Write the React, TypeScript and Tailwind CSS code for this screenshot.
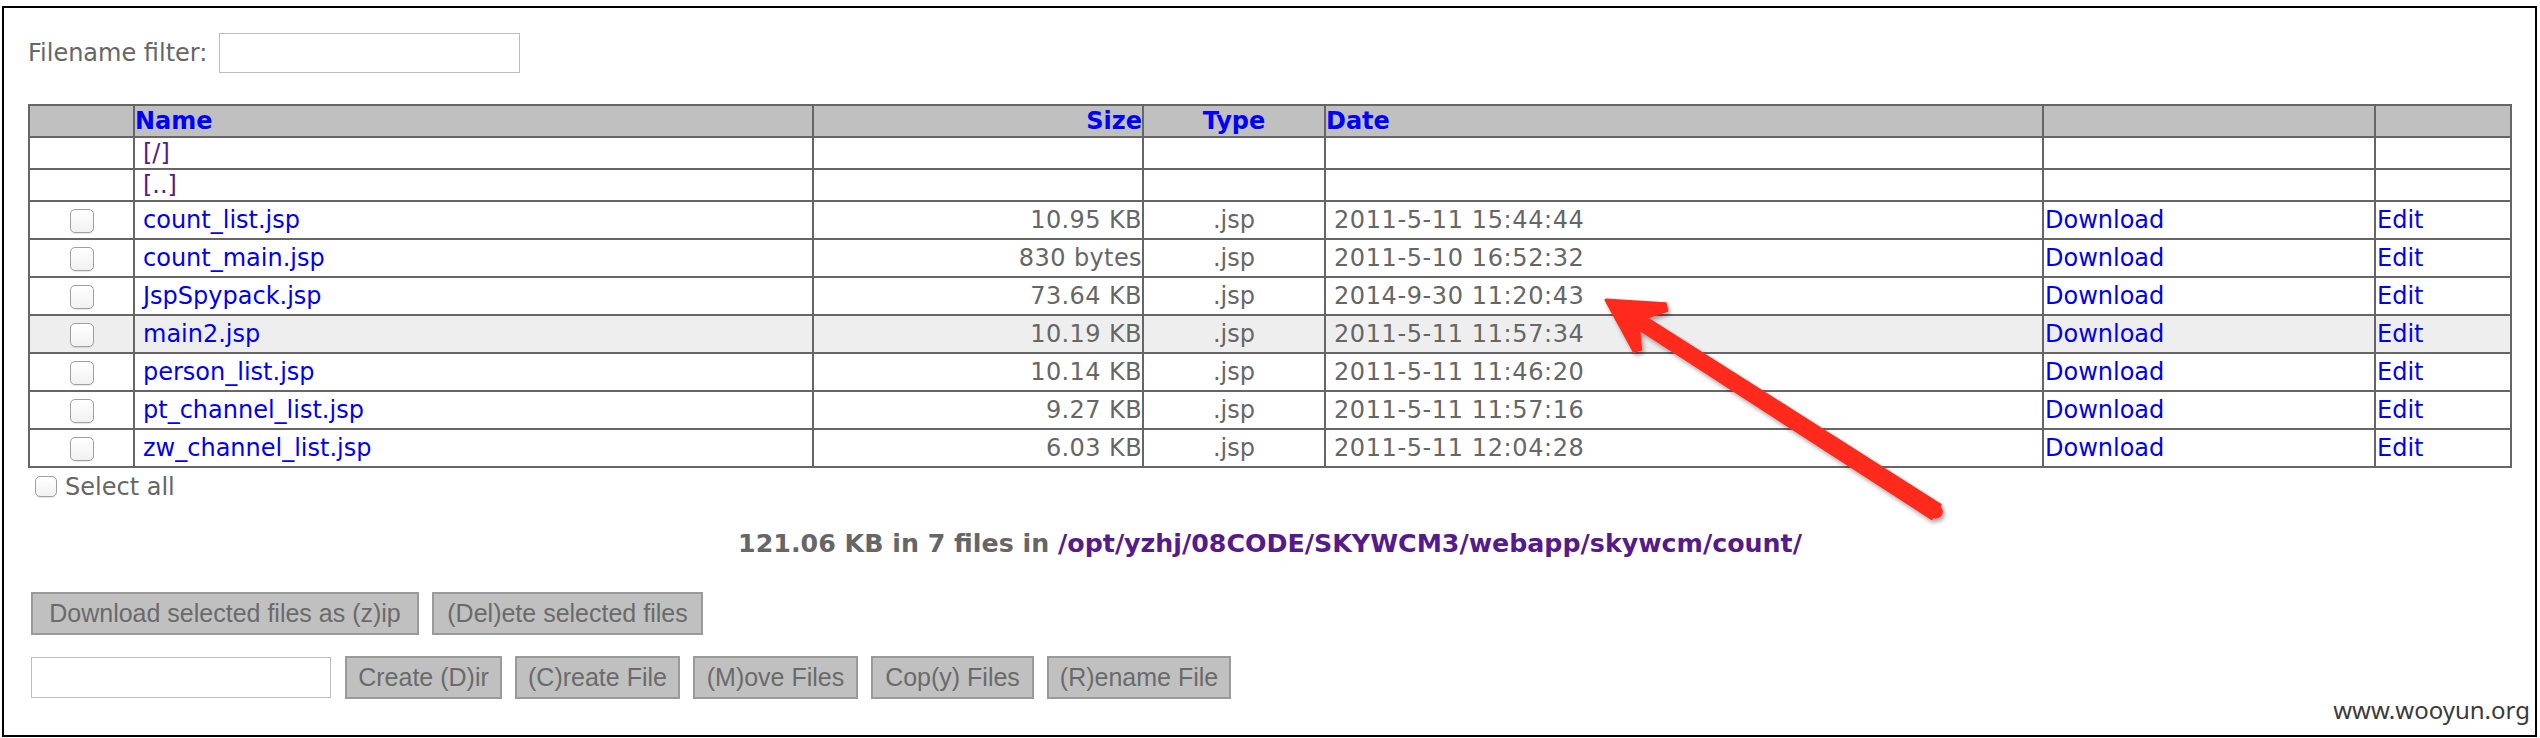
import React from "react";

const files = [
  { name: "count_list.jsp", size: "10.95 KB", date: "2011-5-11 15:44:44", hl: false },
  { name: "count_main.jsp", size: "830 bytes", date: "2011-5-10 16:52:32", hl: false },
  { name: "JspSpypack.jsp", size: "73.64 KB", date: "2014-9-30 11:20:43", hl: false },
  { name: "main2.jsp", size: "10.19 KB", date: "2011-5-11 11:57:34", hl: true },
  { name: "person_list.jsp", size: "10.14 KB", date: "2011-5-11 11:46:20", hl: false },
  { name: "pt_channel_list.jsp", size: "9.27 KB", date: "2011-5-11 11:57:16", hl: false },
  { name: "zw_channel_list.jsp", size: "6.03 KB", date: "2011-5-11 12:04:28", hl: false },
];

function Box({ small }: { small?: boolean }) {
  return (
    <span
      className={
        "inline-block rounded-[5px] border-[1.5px] border-[#a0a0a0] bg-linear-to-b from-white to-[#f1f1f1] shadow-[0_1px_1px_rgba(0,0,0,0.1)] " +
        (small ? "w-[22px] h-[21px]" : "w-[24px] h-[24px] mt-[2px]")
      }
    />
  );
}

function Arrow() {
  const T = [1606, 300];
  const u = [0.8416, 0.5399];
  const n = [0.5399, -0.8416];
  const P = (a: number, p: number) =>
    `${(T[0] + a * u[0] + p * n[0]).toFixed(1)},${(T[1] + a * u[1] + p * n[1]).toFixed(1)}`;
  const pts = [
    P(0, 0),
    P(52, 29),
    P(57, 24),
    P(43, 6.5),
    P(392, 8),
    P(392, -8),
    P(43, -6.5),
    P(56, -23),
    P(51, -28),
  ].join(" ");
  const tail = [T[0] + 392 * u[0], T[1] + 392 * u[1]];
  return (
    <svg
      className="absolute left-0 top-0 pointer-events-none"
      width={2540}
      height={738}
      viewBox="0 0 2540 738"
    >
      <defs>
        <filter id="sh" x="-20%" y="-20%" width="140%" height="140%">
          <feDropShadow dx="2" dy="3" stdDeviation="2" floodColor="#000" floodOpacity="0.35" />
        </filter>
      </defs>
      <g filter="url(#sh)" fill="#ff2b1f" stroke="#ff2b1f" strokeLinejoin="round" strokeWidth={3}>
        <polygon points={pts} />
        <circle cx={tail[0]} cy={tail[1]} r={7} stroke="none" />
      </g>
    </svg>
  );
}

export default function App() {
  const cell = "bg-white flex items-center";
  const hdr = "bg-[#c0c0c0] flex items-center font-bold text-[24px] text-[#0000ff]";
  return (
    <div className="relative w-[2540px] h-[738px] bg-white overflow-hidden pt-[6px] pl-[2px] font-['DejaVu_Sans',Verdana,sans-serif] text-[#666]">
      <div className="w-[2535px] h-[731px] border-2 border-black pl-[24px] pt-[25px]">
        <div className="flex items-center h-[40px]">
          <span className="text-[24px] leading-[28px]">Filename filter:</span>
          <input
            type="text"
            className="ml-[12px] w-[301px] h-[40px] border border-[#bdbdbd] bg-white outline-none"
          />
        </div>

        <div className="mt-[31px] w-fit grid grid-cols-[103px_677px_328px_180px_716px_330px_134px] grid-rows-[30px_30px_30px_repeat(7,36px)] gap-[2px] p-[2px] bg-[#666] text-[24px] leading-none">
          {/* header */}
          <div className="bg-[#c0c0c0]" />
          <div className={hdr}>Name</div>
          <div className={hdr + " justify-end"}>Size</div>
          <div className={hdr + " justify-center"}>Type</div>
          <div className={hdr}>Date</div>
          <div className="bg-[#c0c0c0]" />
          <div className="bg-[#c0c0c0]" />

          {["[/]", "[..]"].map((d) => (
            <React.Fragment key={d}>
              <div className={cell} />
              <div className={cell + " pl-[8px] text-[#551a8b]"}>{d}</div>
              <div className={cell} />
              <div className={cell} />
              <div className={cell} />
              <div className={cell} />
              <div className={cell} />
            </React.Fragment>
          ))}

          {files.map((f) => {
            const bg = f.hl ? "bg-[#eeeeee]" : "bg-white";
            const c = bg + " flex items-center";
            return (
              <React.Fragment key={f.name}>
                <div className={c + " justify-center"}>
                  <Box />
                </div>
                <div className={c + " pl-[8px] text-[#0000ee]"}>{f.name}</div>
                <div className={c + " justify-end tracking-[0.4px]"}>{f.size}</div>
                <div className={c + " justify-center"}>.jsp</div>
                <div className={c + " pl-[8px] tracking-[0.6px]"}>{f.date}</div>
                <div className={c + " pl-[1px] text-[#0000ee]"}>Download</div>
                <div className={c + " pl-[1px] text-[#0000ee]"}>Edit</div>
              </React.Fragment>
            );
          })}
        </div>

        <div className="mt-[8px] ml-[7px] flex items-center h-[21px]">
          <Box small />
          <span className="ml-[8px] text-[24px] leading-none">Select all</span>
        </div>

        <div className="mt-[32px] w-[2484px] text-center font-bold text-[25.3px] leading-[29px]">
          121.06 KB in 7 files in <span className="text-[#551a8b]">/opt/yzhj/08CODE/SKYWCM3/webapp/skywcm/count/</span>
        </div>

        <div className="mt-[34px] ml-[3px] flex gap-[13px] font-['Liberation_Sans',Arial,sans-serif] text-[25px] leading-[29px] text-[#6a6a6a]">
          <button className="w-[388px] h-[43px] bg-[#c0c0c0] border-2 border-[#9a9a9a]">Download selected files as (z)ip</button>
          <button className="w-[271px] h-[43px] bg-[#c0c0c0] border-2 border-[#9a9a9a]">(Del)ete selected files</button>
        </div>

        <div className="mt-[21px] ml-[3px] flex items-center gap-[13px] font-['Liberation_Sans',Arial,sans-serif] text-[25px] leading-[29px] text-[#6a6a6a]">
          <input type="text" className="w-[300px] h-[41px] mr-[1px] border border-[#bdbdbd] bg-white outline-none" />
          <button className="w-[157px] h-[43px] bg-[#c0c0c0] border-2 border-[#9a9a9a]">Create (D)ir</button>
          <button className="w-[165px] h-[43px] bg-[#c0c0c0] border-2 border-[#9a9a9a]">(C)reate File</button>
          <button className="w-[165px] h-[43px] bg-[#c0c0c0] border-2 border-[#9a9a9a]">(M)ove Files</button>
          <button className="w-[163px] h-[43px] bg-[#c0c0c0] border-2 border-[#9a9a9a]">Cop(y) Files</button>
          <button className="w-[184px] h-[43px] bg-[#c0c0c0] border-2 border-[#9a9a9a]">(R)ename File</button>
        </div>
      </div>

      <div className="absolute right-[10px] top-[698px] font-['Noto_Sans',sans-serif] text-[24px] leading-none text-[#3a3a3a]">
        www.wooyun.org
      </div>

      <Arrow />
    </div>
  );
}
